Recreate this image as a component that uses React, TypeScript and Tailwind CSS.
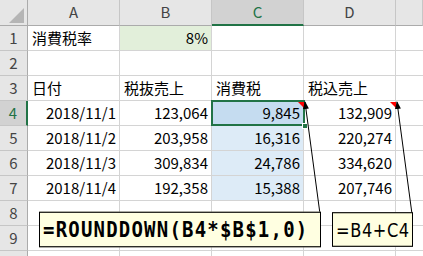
import type { ReactNode } from 'react';

type Cell = { text: string; align?: 'left' | 'right'; bg?: string };

const COLS = ['A', 'B', 'C', 'D', ''];

const rows: Cell[][] = [
  [{ text: '消費税率' }, { text: '8%', align: 'right', bg: 'bg-[#e2efda]' }, { text: '' }, { text: '' }],
  [{ text: '' }, { text: '' }, { text: '' }, { text: '' }],
  [{ text: '日付' }, { text: '税抜売上' }, { text: '消費税' }, { text: '税込売上' }],
  [
    { text: '2018/11/1', align: 'right' },
    { text: '123,064', align: 'right' },
    { text: '9,845', align: 'right', bg: 'bg-[#c5dcf0]' },
    { text: '132,909', align: 'right' },
  ],
  [
    { text: '2018/11/2', align: 'right' },
    { text: '203,958', align: 'right' },
    { text: '16,316', align: 'right', bg: 'bg-[#ddebf7]' },
    { text: '220,274', align: 'right' },
  ],
  [
    { text: '2018/11/3', align: 'right' },
    { text: '309,834', align: 'right' },
    { text: '24,786', align: 'right', bg: 'bg-[#ddebf7]' },
    { text: '334,620', align: 'right' },
  ],
  [
    { text: '2018/11/4', align: 'right' },
    { text: '192,358', align: 'right' },
    { text: '15,388', align: 'right', bg: 'bg-[#ddebf7]' },
    { text: '207,746', align: 'right' },
  ],
  [{ text: '' }, { text: '' }, { text: '' }, { text: '' }],
  [{ text: '' }, { text: '' }, { text: '' }, { text: '' }],
  [{ text: '' }, { text: '' }, { text: '' }, { text: '' }],
];

function Callout({ className, children }: { className: string; children: ReactNode }) {
  return (
    <div
      className={`absolute top-[214px] h-[31px] bg-[#ffffe1] border border-black flex items-center text-black ${className}`}
    >
      {children}
    </div>
  );
}

export default function App() {
  return (
    <div className="relative w-[423px] h-[256px] overflow-hidden bg-white text-[15px] font-['Noto_Sans_CJK_JP',sans-serif] text-black">
      <div className="grid grid-cols-[28px_92px_92px_92px_92px_27px] grid-rows-[26px_repeat(10,25px)]">
        {/* corner */}
        <div className="relative bg-[#e6e6e6] border-r border-b border-[#ababab]">
          <svg className="absolute left-0 top-0" width="28" height="26">
            <polygon points="24,8 24,23 9,23" fill="#b5b5b5" />
          </svg>
        </div>
        {COLS.map((c, i) => {
          const sel = c === 'C';
          return (
            <div
              key={i}
              className={`flex items-center justify-center border-r border-[#c6c6c6] ${
                sel
                  ? 'bg-[#d2d2d2] text-[#217346] border-b-2 border-b-[#217346]'
                  : 'bg-[#e6e6e6] text-[#444] border-b border-b-[#ababab]'
              }`}
            >
              {c}
            </div>
          );
        })}

        {rows.map((row, r) => {
          const n = r + 1;
          const sel = n === 4;
          return [
            <div
              key={`h${n}`}
              className={`flex items-center justify-center border-b border-[#c6c6c6] ${
                sel
                  ? 'bg-[#d2d2d2] text-[#217346] border-r-2 border-r-[#217346]'
                  : 'bg-[#e6e6e6] text-[#444] border-r border-r-[#ababab]'
              }`}
            >
              {n < 10 ? n : ''}
            </div>,
            ...row.map((cell, ci) => (
              <div
                key={`${n}-${ci}`}
                className={`flex items-center whitespace-nowrap border-r border-b border-[#d4d4d4] ${
                  cell.align === 'right' ? 'justify-end pr-[3px]' : 'justify-start pl-[4px]'
                } ${cell.bg ?? ''}`}
              >
                {cell.text}
              </div>
            )),
            <div key={`e${n}`} className="border-b border-[#d4d4d4]" />,
          ];
        })}
      </div>

      {/* active cell C4 */}
      <div className="absolute left-[211px] top-[100px] w-[94px] h-[26px] border-2 border-[#217346]" />
      <div className="absolute left-[302px] top-[123px] w-[6px] h-[6px] bg-[#217346] border border-white" />

      {/* comment markers + arrows */}
      <svg className="absolute left-0 top-0" width="423" height="256">
        <defs>
          <marker id="head" markerWidth="8" markerHeight="8" refX="7" refY="4" orient="auto">
            <polygon points="0,1 8,4 0,7" fill="#000" />
          </marker>
        </defs>
        <polygon points="298,102 304,102 304,108" fill="#ff0000" />
        <polygon points="390,102 396,102 396,108" fill="#ff0000" />
        <line x1="320" y1="214" x2="305" y2="102" stroke="#000" strokeWidth="1" markerEnd="url(#head)" />
        <line x1="412" y1="214" x2="397" y2="102" stroke="#000" strokeWidth="1" markerEnd="url(#head)" />
      </svg>

      <Callout className="left-[39px] w-[282px] pl-[3px] font-['DejaVu_Sans_Mono',monospace] font-bold text-[19px] tracking-[1.2px] scale-y-[1.15]">
        =ROUNDDOWN(B4*$B$1,0)
      </Callout>
      <Callout className="left-[332px] w-[81px] pl-[3px] font-['DejaVu_Sans_Condensed','DejaVu_Sans',sans-serif] text-[18px] tracking-[0.6px] scale-y-[1.12]">
        =B4+C4
      </Callout>
    </div>
  );
}
